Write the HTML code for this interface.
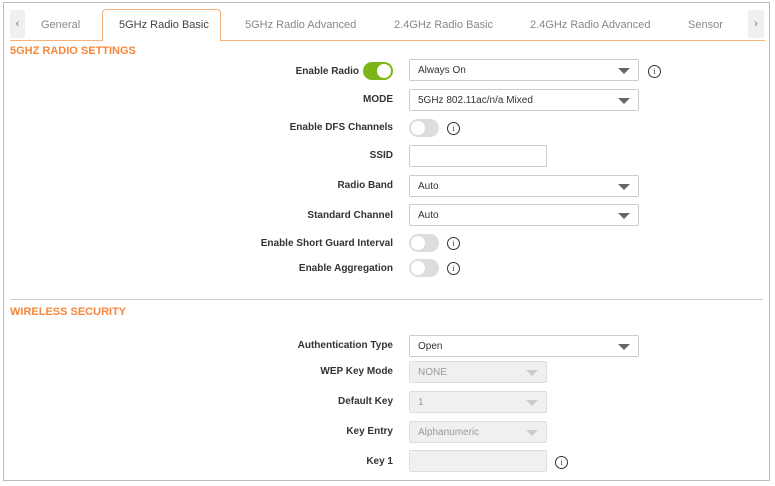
<!DOCTYPE html>
<html><head><style>
body{margin:0;width:775px;height:486px;background:#fff;font-family:"Liberation Sans",sans-serif;position:relative;overflow:hidden}
.a{position:absolute}
.frame{left:3px;top:2px;width:767px;height:479px;border:1px solid #bbb;box-sizing:border-box}
.tab{top:19px;font-size:11px;color:#888}
.lbl{right:382px;font-size:10px;font-weight:bold;color:#333;text-align:right;white-space:nowrap}
.sel{left:409px;height:22px;border:1px solid #ccc;border-radius:2px;box-sizing:border-box;font-size:10px;color:#333;padding:5px 0 0 8px;background:#fff}
.sel.w{width:230px}.sel.n{width:138px}
.sel.d{background:#f0f0f0;color:#999;border-color:#ddd}
.sel:after{content:"";position:absolute;right:8px;top:8px;border-left:6px solid transparent;border-right:6px solid transparent;border-top:6px solid #666}
.sel.d:after{border-top-color:#ccc}
.sel.t:after{display:none}
.tg{left:409px;width:30px;height:18px;border-radius:9px;background:#ddd;box-sizing:border-box}
.tg:after{content:"";position:absolute;left:2px;top:2px;width:14px;height:14px;border-radius:50%;background:#fff}
.tg.on{background:#7cb518}.tg.on:after{left:14px}
.i{width:11px;height:11px;border:1px solid #333;border-radius:50%;font-size:8px;text-align:center;line-height:11px;color:#333;font-family:"Liberation Serif",serif}
.h{left:10px;font-size:11px;font-weight:bold;color:#f7873a}
</style></head><body>
<div class="a frame"></div>
<div class="a" style="left:10px;top:10px;width:15px;height:28px;background:#f0f0f0;border-radius:2px;color:#777;font-size:11px;text-align:center;line-height:28px">‹</div>
<div class="a" style="left:748px;top:10px;width:16px;height:28px;background:#f0f0f0;border-radius:2px;color:#777;font-size:11px;text-align:center;line-height:28px">›</div>
<div class="a" style="left:10px;top:40px;width:755px;height:1px;background:#f7b27a"></div>
<div class="a" style="left:102px;top:9px;width:119px;height:32px;border:1px solid #f7b27a;border-bottom:none;border-radius:4px 4px 0 0;background:#fff;box-sizing:border-box"></div>
<div class="a tab" style="left:41px">General</div>
<div class="a tab" style="left:119px;color:#444">5GHz Radio Basic</div>
<div class="a tab" style="left:245px">5GHz Radio Advanced</div>
<div class="a tab" style="left:394px">2.4GHz Radio Basic</div>
<div class="a tab" style="left:530px">2.4GHz Radio Advanced</div>
<div class="a tab" style="left:688px">Sensor</div>
<div class="a h" style="top:45px">5GHZ RADIO SETTINGS</div>
<div class="a lbl" style="top:66px;right:416px">Enable Radio</div>
<div class="a tg on" style="left:363px;top:62px"></div>
<div class="a sel w" style="top:59px">Always On</div>
<div class="a i" style="left:648px;top:65px">i</div>
<div class="a lbl" style="top:94px">MODE</div>
<div class="a sel w" style="top:89px">5GHz 802.11ac/n/a Mixed</div>
<div class="a lbl" style="top:122px">Enable DFS Channels</div>
<div class="a tg" style="top:119px"></div>
<div class="a i" style="left:447px;top:122px">i</div>
<div class="a lbl" style="top:150px">SSID</div>
<div class="a sel n t" style="top:145px"></div>
<div class="a lbl" style="top:180px">Radio Band</div>
<div class="a sel w" style="top:175px">Auto</div>
<div class="a lbl" style="top:210px">Standard Channel</div>
<div class="a sel w" style="top:204px">Auto</div>
<div class="a lbl" style="top:238px">Enable Short Guard Interval</div>
<div class="a tg" style="top:234px"></div>
<div class="a i" style="left:447px;top:237px">i</div>
<div class="a lbl" style="top:263px">Enable Aggregation</div>
<div class="a tg" style="top:259px"></div>
<div class="a i" style="left:447px;top:262px">i</div>
<div class="a" style="left:10px;top:299px;width:753px;height:1px;background:#ccc"></div>
<div class="a h" style="top:306px">WIRELESS SECURITY</div>
<div class="a lbl" style="top:340px">Authentication Type</div>
<div class="a sel w" style="top:335px">Open</div>
<div class="a lbl" style="top:366px">WEP Key Mode</div>
<div class="a sel n d" style="top:361px">NONE</div>
<div class="a lbl" style="top:396px">Default Key</div>
<div class="a sel n d" style="top:391px">1</div>
<div class="a lbl" style="top:426px">Key Entry</div>
<div class="a sel n d" style="top:421px">Alphanumeric</div>
<div class="a lbl" style="top:456px">Key 1</div>
<div class="a sel n d t" style="top:450px"></div>
<div class="a i" style="left:555px;top:456px">i</div>
</body></html>
